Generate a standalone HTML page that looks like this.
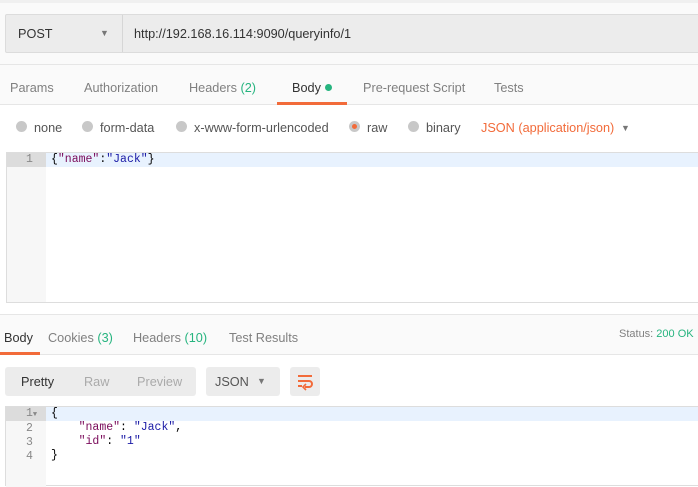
<!DOCTYPE html><html><head><style>
body{margin:0;width:698px;height:480px;background:#fff;font-family:"Liberation Sans",sans-serif;font-size:12.7px;color:#808080;position:relative;overflow:hidden}
.a{position:absolute}
.mono{font-family:"Liberation Mono",monospace;font-size:11.5px}
</style></head><body>
<div class="a" style="left:0;top:0;width:698px;height:64px;background:#fafafa;border-top:3px solid #f0f0f0;box-sizing:border-box"></div>
<div class="a" style="left:5px;top:14px;width:700px;height:39px;background:#ececec;border:1px solid #dcdcdc;box-sizing:border-box;border-radius:2px"></div>
<div class="a" style="left:122px;top:15px;width:1px;height:37px;background:#d6d6d6"></div>
<div class="a" style="left:18px;top:27px;color:#333">POST</div>
<div class="a" style="left:100px;top:28px;color:#777;font-size:9px">▼</div>
<div class="a" style="left:134px;top:27px;color:#333">http://192.168.16.114:9090/queryinfo/1</div>
<div class="a" style="left:0;top:64px;width:698px;height:41px;background:#fafafa;border-top:1px solid #e6e6e6;border-bottom:1px solid #e6e6e6;box-sizing:border-box"></div>
<div class="a" style="left:10px;top:81px">Params</div>
<div class="a" style="left:84px;top:81px">Authorization</div>
<div class="a" style="left:189px;top:81px">Headers <span style="color:#26b47f">(2)</span></div>
<div class="a" style="left:292px;top:81px;color:#333">Body</div>
<div class="a" style="left:325px;top:84px;width:7px;height:7px;border-radius:50%;background:#26b47f"></div>
<div class="a" style="left:277px;top:102px;width:70px;height:3px;background:#f26b3a"></div>
<div class="a" style="left:363px;top:81px">Pre-request Script</div>
<div class="a" style="left:494px;top:81px">Tests</div>
<div class="a" style="left:16px;top:121px;width:11px;height:11px;border-radius:50%;background:#c8c8c8"></div><div class="a" style="left:34px;top:121px;color:#555">none</div>
<div class="a" style="left:82px;top:121px;width:11px;height:11px;border-radius:50%;background:#c8c8c8"></div><div class="a" style="left:100px;top:121px;color:#555">form-data</div>
<div class="a" style="left:176px;top:121px;width:11px;height:11px;border-radius:50%;background:#c8c8c8"></div><div class="a" style="left:194px;top:121px;color:#555">x-www-form-urlencoded</div>
<div class="a" style="left:349px;top:121px;width:11px;height:11px;border-radius:50%;background:#c8c8c8"></div><div class="a" style="left:352px;top:124px;width:5px;height:5px;border-radius:50%;background:#f26b3a"></div><div class="a" style="left:367px;top:121px;color:#555">raw</div>
<div class="a" style="left:408px;top:121px;width:11px;height:11px;border-radius:50%;background:#c8c8c8"></div><div class="a" style="left:426px;top:121px;color:#555">binary</div>
<div class="a" style="left:481px;top:121px;color:#f26b3a">JSON (application/json)</div>
<div class="a" style="left:621px;top:123px;color:#777;font-size:9px">▼</div>
<div class="a" style="left:6px;top:152px;width:700px;height:151px;border:1px solid #ddd;box-sizing:border-box"></div>
<div class="a" style="left:7px;top:153px;width:39px;height:149px;background:#f7f7f7"></div>
<div class="a" style="left:7px;top:153px;width:39px;height:14px;background:#dcdcdc"></div>
<div class="a" style="left:46px;top:153px;width:652px;height:14px;background:#e8f2fe"></div>
<div class="a mono" style="left:26px;top:153px;color:#888">1</div>
<div class="a mono" style="left:51px;top:153px;color:#000">{<span style="color:#7a0a5a">"name"</span>:<span style="color:#1a1aa6">"Jack"</span>}</div>
<div class="a" style="left:0;top:314px;width:698px;height:41px;background:#fafafa;border-top:1px solid #e6e6e6;border-bottom:1px solid #e6e6e6;box-sizing:border-box"></div>
<div class="a" style="left:4px;top:331px;color:#333">Body</div>
<div class="a" style="left:0;top:352px;width:40px;height:3px;background:#f26b3a"></div>
<div class="a" style="left:48px;top:331px">Cookies <span style="color:#26b47f">(3)</span></div>
<div class="a" style="left:133px;top:331px">Headers <span style="color:#26b47f">(10)</span></div>
<div class="a" style="left:229px;top:331px">Test Results</div>
<div class="a" style="left:619px;top:328px;font-size:11px">Status: <span style="color:#26b47f">200 OK</span></div>
<div class="a" style="left:5px;top:367px;width:191px;height:29px;background:#ececec;border-radius:3px"></div>
<div class="a" style="left:21px;top:375px;color:#333">Pretty</div>
<div class="a" style="left:84px;top:375px;color:#aaa">Raw</div>
<div class="a" style="left:137px;top:375px;color:#aaa">Preview</div>
<div class="a" style="left:206px;top:367px;width:74px;height:29px;background:#ececec;border-radius:3px"></div>
<div class="a" style="left:215px;top:375px;color:#555">JSON</div>
<div class="a" style="left:257px;top:376px;color:#777;font-size:9px">▼</div>
<div class="a" style="left:290px;top:367px;width:30px;height:29px;background:#ececec;border-radius:3px"></div>
<svg class="a" style="left:296px;top:373px" width="18" height="18" viewBox="0 0 18 18"><path d="M2 3h14M2 8h11a3 3 0 0 1 0 6H9M2 13h4" stroke="#f26b3a" stroke-width="2" fill="none"/><path d="M10 11l-3 3 3 3" stroke="#f26b3a" stroke-width="1.6" fill="none"/></svg>
<div class="a" style="left:5px;top:406px;width:700px;height:80px;border:1px solid #ddd;box-sizing:border-box"></div>
<div class="a" style="left:6px;top:407px;width:40px;height:80px;background:#f7f7f7"></div>
<div class="a" style="left:6px;top:407px;width:40px;height:14px;background:#dcdcdc"></div>
<div class="a" style="left:46px;top:407px;width:652px;height:14px;background:#e8f2fe"></div>
<div class="a mono" style="left:26px;top:407px;color:#888;line-height:14px">1<span style="font-size:7px">▼</span><br>2<br>3<br>4</div>
<div class="a mono" style="left:51px;top:407px;color:#000;line-height:14px;white-space:pre">{
    <span style="color:#7a0a5a">"name"</span>: <span style="color:#1a1aa6">"Jack"</span>,
    <span style="color:#7a0a5a">"id"</span>: <span style="color:#1a1aa6">"1"</span>
}</div>
</body></html>
